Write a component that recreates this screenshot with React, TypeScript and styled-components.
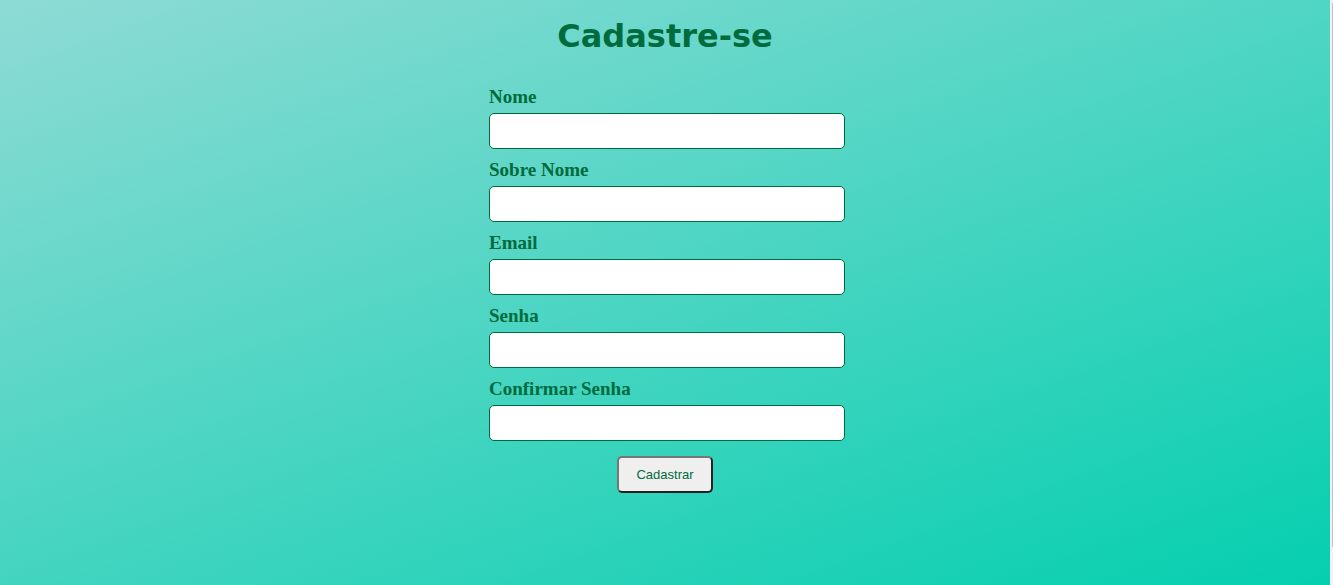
import React from "react";
import styled, { createGlobalStyle } from "styled-components";

const GlobalStyle = createGlobalStyle`
  * { box-sizing: border-box; }
  body { margin: 0; }
`;

const Shell = styled.div`
  display: flex;
  min-height: 100vh;
`;

const Page = styled.main`
  flex: 1;
  display: flex;
  flex-direction: column;
  align-items: center;
  padding: 16px 0;
  color: #006b3c;
  background: linear-gradient(160deg, #8edbd5 0%, #05cfaf 100%);
`;

const ScrollTrack = styled.div`
  width: 3px;
  padding: 3px 0 0 2px;
  background: #f1f1f1;
`;

const ScrollThumb = styled.div`
  height: 93vh;
  background: #c1c1c1;
`;

const Title = styled.h1`
  margin: 0;
  font: bold 32px/40px Verdana, "DejaVu Sans", sans-serif;
`;

const Form = styled.form`
  width: 352px;
  margin-top: 28px;
  display: flex;
  flex-direction: column;
`;

const Field = styled.div`
  display: flex;
  flex-direction: column;
  margin-bottom: 8px;
`;

const Label = styled.label`
  font: bold 19px/26px "Liberation Serif", serif;
  margin-bottom: 3px;
`;

const Input = styled.input`
  width: 356px;
  height: 36px;
  padding: 0 8px;
  border: 1px solid #006b3c;
  border-radius: 5px;
  background: #fff;
`;

const Submit = styled.button`
  align-self: center;
  margin-top: 7px;
  width: 96px;
  height: 37px;
  border: 2px solid;
  border-color: #767676 #212121 #212121 #767676;
  border-radius: 5px;
  background: #efefef;
  color: #006b3c;
  font: 13px/15px "Liberation Sans", sans-serif;
`;

const fields = [
  { id: "nome", label: "Nome", type: "text" },
  { id: "sobrenome", label: "Sobre Nome", type: "text" },
  { id: "email", label: "Email", type: "email" },
  { id: "senha", label: "Senha", type: "password" },
  { id: "confirmar", label: "Confirmar Senha", type: "password" },
];

export default function App() {
  return (
    <>
      <GlobalStyle />
      <Shell>
        <Page>
          <Title>Cadastre-se</Title>
          <Form>
            {fields.map((f) => (
              <Field key={f.id}>
                <Label htmlFor={f.id}>{f.label}</Label>
                <Input id={f.id} name={f.id} type={f.type} />
              </Field>
            ))}
            <Submit type="submit">Cadastrar</Submit>
          </Form>
        </Page>
        <ScrollTrack aria-hidden="true">
          <ScrollThumb />
        </ScrollTrack>
      </Shell>
    </>
  );
}
